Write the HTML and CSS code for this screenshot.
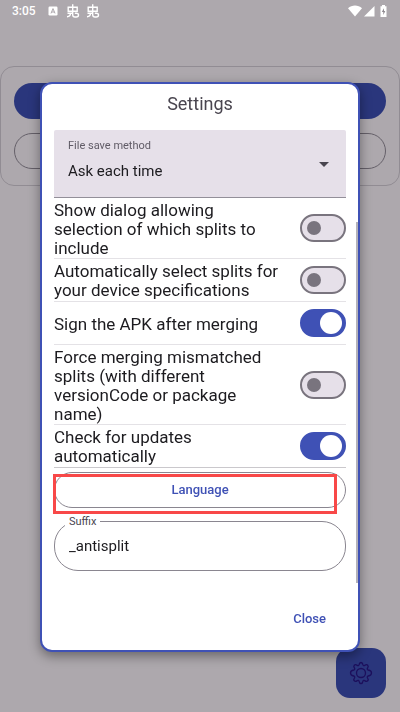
FILE: index.html
```html
<!DOCTYPE html>
<html lang="en">
<head>
    <meta charset="UTF-8">
    <meta name="viewport" content="width=device-width, initial-scale=1.0">
    <title>Settings</title>
    <link rel="stylesheet" href="styles.css">
</head>
<body>

    <header class="status-bar">
        <span class="clock">3:05</span>
        <svg class="icon-keyboard" width="10" height="10" viewBox="0 0 10 10">
            <rect x="0.5" y="0.5" width="9" height="9" rx="1.2" fill="#fff"/>
            <path d="M3 7.4L5 2.6L7 7.4M3.8 6h2.4" fill="none" stroke="#ada8ad" stroke-width="1"/>
        </svg>
        <svg class="icon-bug" width="14" height="14" viewBox="0 0 14 14">
            <path d="M2.200 3.200h9v4h-9zM6.700 .3v8.700M1.500 9.300h5.200M4.500 9.300c0 2-1.200 3.200-3.500 3.400M6.700 9v1.700c0 1.500.8 2.300 2.300 2.300h1.200c1.700 0 2.300-.7 2.300-1.900s-.8-1.900-2.100-1.900H8.800" fill="none" stroke="#fff" stroke-width="1.400"/>
        </svg>
        <svg class="icon-bug" width="14" height="14" viewBox="0 0 14 14">
            <path d="M2.200 3.200h9v4h-9zM6.700 .3v8.700M1.500 9.300h5.200M4.500 9.300c0 2-1.200 3.200-3.500 3.400M6.700 9v1.700c0 1.500.8 2.300 2.300 2.300h1.200c1.700 0 2.300-.7 2.300-1.900s-.8-1.900-2.100-1.900H8.800" fill="none" stroke="#fff" stroke-width="1.400"/>
        </svg>
        <svg class="icon-signal" width="40" height="14" viewBox="0 0 40 14">
            <path d="M0 4.200C3.800.6 10.200.6 14 4.200L7 12.500z" fill="#fff"/>
            <path d="M26.500 2v10.500H16z" fill="#fff"/>
            <path d="M34 1h3v1.200h1.500v10.800h-6V2.200H34z" fill="#fff"/>
            <path d="M36 4.200L33.800 8h1.500v3l2-4h-1.300z" fill="#8f8a90"/>
        </svg>
    </header>

    <main class="card">
        <button class="btn-filled" aria-label="Select file"></button>
        <button class="btn-outlined" aria-label="Select from installed apps"></button>
    </main>

    <button class="fab" aria-label="Open settings">
        <svg width="24" height="24" viewBox="0 0 24 24" fill="none" stroke="#1c0f5c" stroke-width="1.300" stroke-linejoin="round">
            <path d="M10.100 3.700C10.400 2 10.700 1.500 12 1.500s1.600.5 1.900 2.200c.2.900 1 1.200 1.800.7 1.400-1 2-1.200 3-.2s.8 1.600-.2 3c-.5.8-.2 1.600.7 1.800 1.700.3 3.300.6 3.300 3s-1.600 2.700-3.300 3c-.9.200-1.200 1-.7 1.800 1 1.400 1.200 2 .2 3s-1.600.8-3-.2c-.8-.5-1.600-.2-1.800.7-.3 1.700-.6 2.200-1.900 2.200s-1.600-.5-1.900-2.200c-.2-.9-1-1.200-1.800-.7-1.400 1-2 1.200-3 .2s-.8-1.600.2-3c.5-.8.2-1.600-.7-1.800-1.700-.3-3.300-.6-3.300-3s1.600-2.700 3.300-3c.9-.2 1.200-1 .7-1.800-1-1.400-1.200-2-.2-3s1.600-.8 3 .2c.8.5 1.600.2 1.800-.7z"/>
            <circle cx="12" cy="12" r="4.500"/>
        </svg>
    </button>

    <div class="overlay">
        <form class="dialog" role="dialog" aria-labelledby="dialogTitle">
            <h1 id="dialogTitle">Settings</h1>

            <div class="dialog-body">
                <div class="select-field">
                    <label for="saveMethod">File save method</label>
                    <select id="saveMethod">
                        <option>Ask each time</option>
                    </select>
                </div>

                <div class="row">
                    <label for="showDialog">Show dialog allowing selection of which splits to include</label>
                    <input type="checkbox" role="switch" id="showDialog">
                </div>
                <div class="row">
                    <label for="autoSelect">Automatically select splits for your device specifications</label>
                    <input type="checkbox" role="switch" id="autoSelect">
                </div>
                <div class="row">
                    <label for="signApk">Sign the APK after merging</label>
                    <input type="checkbox" role="switch" id="signApk" checked>
                </div>
                <div class="row">
                    <label for="forceMerge">Force merging mismatched splits (with different versionCode or package name)</label>
                    <input type="checkbox" role="switch" id="forceMerge">
                </div>
                <div class="row row-last">
                    <label for="checkUpdates">Check for updates automatically</label>
                    <input type="checkbox" role="switch" id="checkUpdates" checked>
                </div>

                <div class="language">
                    <button type="button" class="language-btn">Language</button>
                    <div class="highlight"></div>
                </div>

                <div class="text-field">
                    <label for="suffix">Suffix</label>
                    <input type="text" id="suffix" value="_antisplit">
                </div>
                <div class="scrollbar"></div>
            </div>

            <div class="actions">
                <button type="button" class="close-btn">Close</button>
            </div>
        </form>
    </div>

</body>
</html>
```
FILE: styles.css
```css
* {
    box-sizing: border-box;
}

body {
    margin: 0;
    min-height: 100vh;
    background-color: #ada8ad;
    font-family: Roboto, "Liberation Sans", sans-serif;
    color: #1c1b1f;
}

button, input, select {
    font-family: inherit;
    margin: 0;
}

button {
    cursor: pointer;
}

/* Status bar */
.status-bar {
    display: flex;
    align-items: center;
    height: 22px;
    padding: 0 12px;
    color: white;
}

.clock {
    font-size: 12px;
    font-weight: 500;
    margin-right: 12px;
}

.icon-bug {
    margin-left: 6px;
}

.icon-keyboard {
    margin-right: 2px;
}

.icon-signal {
    margin-left: auto;
}

/* Main screen behind the dialog */
.card {
    display: flex;
    flex-direction: column;
    gap: 14px;
    margin-top: 44px;
    padding: 16px 13px;
    border: 1px solid #918c93;
    border-radius: 14px;
}

.btn-filled, .btn-outlined {
    height: 36px;
    border: none;
    border-radius: 18px;
    background: #2a367c;
}

.btn-outlined {
    background: none;
    border: 1px solid #656069;
}

.fab {
    position: fixed;
    right: 14px;
    bottom: 14px;
    display: flex;
    align-items: center;
    justify-content: center;
    width: 50px;
    height: 50px;
    padding: 0;
    border: none;
    border-radius: 14px;
    background: #2a367c;
}

/* Dialog */
.overlay {
    position: fixed;
    inset: 0;
    display: flex;
    align-items: center;
    justify-content: center;
    padding: 21px 40px 0;
}

.dialog {
    width: 100%;
    max-width: 480px;
    background: white;
    border: 2px solid #3f51b5;
    border-radius: 12px;
    box-shadow: 0 4px 12px rgba(0, 0, 0, 0.4);
}

.dialog h1 {
    margin: 0;
    padding: 8px 0 14px;
    font-size: 18px;
    font-weight: 400;
    line-height: 24px;
    text-align: center;
    color: #49454f;
}

.dialog-body {
    position: relative;
    padding: 0 12px 12px;
}

.select-field {
    position: relative;
    height: 68px;
    background: #e6e0e9;
    border-bottom: 1px solid #938f99;
    border-radius: 2px 2px 0 0;
}

.select-field label {
    position: absolute;
    top: 8px;
    left: 14px;
    font-size: 11px;
    line-height: 16px;
    color: #605b66;
}

.select-field select {
    width: 100%;
    height: 100%;
    padding: 18px 14px 2px;
    border: none;
    background: none;
    appearance: none;
    font-size: 15px;
    color: #1c1b1f;
}

.select-field::after {
    content: "";
    position: absolute;
    top: 32px;
    right: 17px;
    border: 5px solid transparent;
    border-top-color: #49454f;
    border-bottom: none;
    pointer-events: none;
}

.row {
    display: flex;
    align-items: center;
    justify-content: space-between;
    min-height: 43px;
    padding: 1px 0 0;
    border-bottom: 1px solid #e4e2e6;
}

.row-last {
    border-bottom-color: #cac8cc;
}

.row label {
    max-width: 230px;
    padding-top: 2px;
    font-size: 17px;
    line-height: 19px;
}

/* Switches */
.row input {
    display: flex;
    align-items: center;
    flex: none;
    width: 46px;
    height: 28px;
    padding: 0 7px;
    border: 2px solid #79747e;
    border-radius: 14px;
    background: #e6e0e9;
    appearance: none;
}

.row input::before {
    content: "";
    width: 14px;
    height: 14px;
    margin-left: -2px;
    border-radius: 50%;
    background: #79747e;
}

.row input:checked {
    justify-content: flex-end;
    padding: 0 2px;
    border-color: #3f51b5;
    background: #3f51b5;
}

.row input:checked::before {
    width: 22px;
    height: 22px;
    background: white;
}

.language {
    position: relative;
    margin-top: 4px;
}

.language-btn {
    display: block;
    width: 100%;
    height: 36px;
    border: 1px solid #8a8690;
    border-radius: 18px;
    background: none;
    font-size: 13px;
    font-weight: 500;
    color: #3f51b5;
}

.highlight {
    position: absolute;
    top: 2px;
    left: -1px;
    right: 9px;
    height: 40px;
    border: 3px solid #f84848;
    pointer-events: none;
}

.text-field {
    position: relative;
    margin-top: 13px;
}

.text-field label {
    position: absolute;
    top: -7px;
    left: 11px;
    padding: 0 4px;
    background: white;
    font-size: 11px;
    line-height: 16px;
    color: #49454f;
}

.text-field input {
    display: block;
    width: 100%;
    height: 50px;
    padding: 0 14px;
    border: 1px solid #8a8690;
    border-radius: 24px;
    background: none;
    font-size: 15px;
    color: #1c1b1f;
}

.scrollbar {
    position: absolute;
    top: 92px;
    right: 0;
    bottom: 0;
    width: 2px;
    background: #b4b2ba;
}

.actions {
    display: flex;
    justify-content: flex-end;
    padding: 18px 20px 13px;
}

.close-btn {
    height: 36px;
    padding: 0 12px;
    border: none;
    background: none;
    font-size: 13px;
    font-weight: 500;
    color: #3f51b5;
}
```
